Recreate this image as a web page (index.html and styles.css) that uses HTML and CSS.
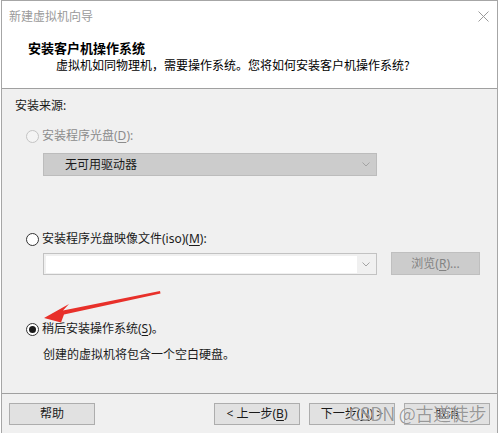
FILE: index.html
```html
<!DOCTYPE html>
<html lang="zh-CN">
<head>
<meta charset="utf-8">
<title>新建虚拟机向导</title>
<link rel="stylesheet" href="styles.css">
</head>
<body>
<div class="window">
  <div class="titlebar">
    <span class="title">新建虚拟机向导</span>
    <svg class="close" width="11" height="11" viewBox="0 0 11 11"><path d="M0.5 0.5 L10.5 10.5 M10.5 0.5 L0.5 10.5" stroke="#9a9a9a" stroke-width="1" fill="none"/></svg>
  </div>
  <div class="header">
    <div class="h-title">安装客户机操作系统</div>
    <div class="h-sub">虚拟机如同物理机，需要操作系统。您将如何安装客户机操作系统?</div>
  </div>
  <div class="content">
    <div class="section-label">安装来源:</div>
    <div class="radio-row disabled"><span class="radio"></span><span>安装程序光盘(<u>D</u>):</span></div>
    <div class="select">
      <span class="select-text">无可用驱动器</span>
      <svg class="chev" width="8" height="5" viewBox="0 0 8 5"><path d="M0.5 0.5 L4 4 L7.5 0.5" stroke="#a3a3a3" stroke-width="1" fill="none"/></svg>
    </div>
    <div class="radio-row"><span class="radio"></span><span>安装程序光盘映像文件(iso)(<u>M</u>):</span></div>
    <div class="iso-row">
      <div class="combo">
        <div class="combo-field"></div>
        <svg class="chev" width="8" height="5" viewBox="0 0 8 5"><path d="M0.5 0.5 L4 4 L7.5 0.5" stroke="#a3a3a3" stroke-width="1" fill="none"/></svg>
      </div>
      <div class="btn btn-disabled">浏览(<u>R</u>)...</div>
    </div>
    <div class="radio-row"><span class="radio checked"></span><span>稍后安装操作系统(<u>S</u>)。</span></div>
    <div class="desc">创建的虚拟机将包含一个空白硬盘。</div>
  </div>
  <div class="footer">
    <div class="btn">帮助</div>
    <div class="spacer"></div>
    <div class="btn">&lt; 上一步(<u>B</u>)</div>
    <div class="btn btn-gap">下一步(<u>N</u>) &gt;</div>
    <div class="btn btn-gap">取消</div>
  </div>
</div>
<svg class="arrow" width="499" height="433" viewBox="0 0 499 433">
  <polygon points="44,318 69,304 63,310.5 160,291 160.5,293.5 64,314.5 61,322.5" fill="#e8302a"/>
</svg>
<div class="watermark">CSDN @古道徒步</div>
</body>
</html>
```

FILE: styles.css
```css
html, body {
  margin: 0;
  padding: 0;
  background: #ffffff;
}
body {
  position: relative;
  width: 499px;
  height: 433px;
  overflow: hidden;
  font-family: "Noto Sans", "Noto Sans CJK SC", sans-serif;
  font-size: 12px;
  color: #1a1a1a;
}
u {
  text-decoration: underline;
  text-underline-offset: 2px;
}
.window {
  box-sizing: border-box;
  width: 497px;
  height: 433px;
  margin-left: 1px;
  border-top: 1px solid #a6a6a6;
  border-left: 1px solid #a6a6a6;
  border-right: 1px solid #a6a6a6;
  background: #f0f0f0;
  display: flex;
  flex-direction: column;
}
.titlebar {
  height: 30px;
  background: #ffffff;
  display: flex;
  align-items: center;
  justify-content: space-between;
  padding: 0 8px 0 7px;
  flex-shrink: 0;
}
.title {
  color: #9a9a9a;
  line-height: 30px;
  font-family: "Noto Sans CJK SC", sans-serif;
}
.close {
  display: block;
}
.header {
  box-sizing: border-box;
  height: 58px;
  background: #ffffff;
  border-bottom: 1px solid #a0a0a0;
  padding-top: 9px;
  flex-shrink: 0;
}
.h-title {
  font-family: "Noto Sans CJK SC", sans-serif;
  font-weight: bold;
  font-size: 13px;
  line-height: 16px;
  padding-left: 26px;
  color: #000;
}
.h-sub {
  font-family: "Noto Sans CJK SC", sans-serif;
  line-height: 17px;
  padding-left: 54px;
  color: #000;
}
.content {
  flex: 1;
  display: flex;
  flex-direction: column;
}
.section-label {
  margin-top: 8px;
  height: 18px;
  line-height: 18px;
  padding-left: 13px;
}
.radio-row {
  display: flex;
  align-items: center;
  height: 18px;
  line-height: 18px;
  padding-left: 24px;
}
.section-label + .radio-row {
  margin-top: 12px;
}
.select + .radio-row {
  margin-top: 54px;
}
.iso-row + .radio-row {
  margin-top: 45px;
}
.radio {
  box-sizing: border-box;
  width: 13px;
  height: 13px;
  border-radius: 50%;
  border: 1px solid #333333;
  background: #ffffff;
  margin-right: 3px;
  display: flex;
  align-items: center;
  justify-content: center;
  flex-shrink: 0;
}
.radio.checked::after {
  content: "";
  width: 7px;
  height: 7px;
  border-radius: 50%;
  background: #1a1a1a;
}
.disabled {
  color: #8c8c8c;
}
.disabled .radio {
  border-color: #c4c4c4;
  background: #f4f4f4;
}
.select {
  box-sizing: border-box;
  margin-top: 8px;
  margin-left: 41px;
  width: 334px;
  height: 23px;
  background: #cccccc;
  border: 1px solid #bcbcbc;
  display: flex;
  align-items: center;
  justify-content: space-between;
  padding: 0 6px 0 21px;
}
.select-text {
  color: #1a1a1a;
  line-height: 18px;
}
.chev {
  display: block;
}
.iso-row {
  margin-top: 4px;
  margin-left: 41px;
  display: flex;
  align-items: flex-end;
}
.combo {
  box-sizing: border-box;
  width: 334px;
  height: 22px;
  background: #f0f0f0;
  border: 1px solid #c2c2c2;
  display: flex;
  align-items: center;
  justify-content: space-between;
  padding: 0 6px 0 2px;
}
.combo-field {
  width: 311px;
  height: 17px;
  background: #ffffff;
}
.btn {
  box-sizing: border-box;
  width: 86px;
  height: 22px;
  background: #e1e1e1;
  border: 1px solid #adadad;
  display: flex;
  align-items: center;
  justify-content: center;
  line-height: 18px;
  color: #1a1a1a;
  flex-shrink: 0;
}
.btn-disabled {
  width: 89px;
  height: 23px;
  margin-left: 14px;
  background: #cccccc;
  border-color: #bfbfbf;
  color: #838383;
}
.desc {
  margin-top: 8px;
  height: 18px;
  line-height: 18px;
  padding-left: 41px;
}
.footer {
  box-sizing: border-box;
  height: 40px;
  border-top: 1px solid #a0a0a0;
  padding: 9px 7px 0 7px;
  display: flex;
  align-items: flex-start;
  flex-shrink: 0;
}
.spacer {
  flex: 1;
}
.btn-gap {
  margin-left: 9px;
}
.arrow {
  position: absolute;
  left: 0;
  top: 0;
  pointer-events: none;
}
.watermark {
  position: absolute;
  left: 349px;
  top: 402px;
  font-family: "Noto Sans CJK SC", sans-serif;
  font-size: 18px;
  line-height: 22px;
  letter-spacing: -0.3px;
  color: rgba(135, 135, 135, 0.85);
  text-shadow: 0 0 1px rgba(255, 255, 255, 0.9);
  white-space: nowrap;
  pointer-events: none;
}
```
